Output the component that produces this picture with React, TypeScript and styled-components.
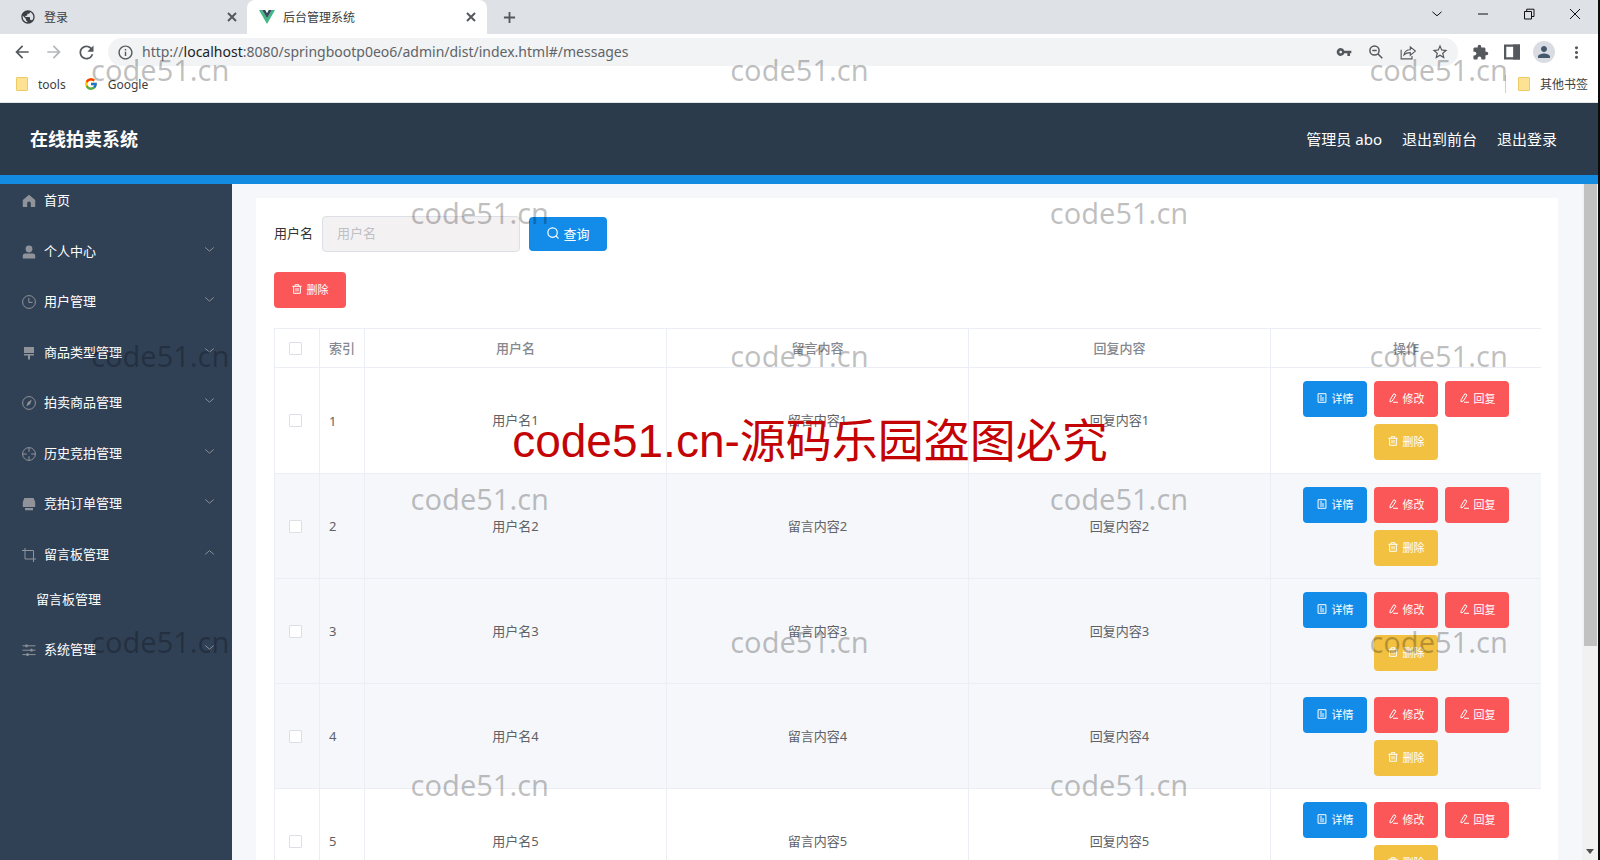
import React from "react";
import styled, { createGlobalStyle, css } from "styled-components";
import {
  MdArrowBack,
  MdArrowForward,
  MdExtension,
  MdInfoOutline,
  MdMoreVert,
  MdPerson,
  MdPublic,
  MdRefresh,
  MdStarOutline,
  MdVpnKey,
} from "react-icons/md";
import { FcGoogle } from "react-icons/fc";

const Global = createGlobalStyle`
  *, *::before, *::after { box-sizing: border-box; }
  body {
    margin: 0;
    font-family: "Noto Sans", "Noto Sans CJK SC", sans-serif;
    font-size: 13px;
    color: #333;
  }
  button, input { font: inherit; color: inherit; }
  button { border: 0; background: none; padding: 0; cursor: pointer; }
  ul { list-style: none; margin: 0; padding: 0; }
  a { color: inherit; text-decoration: none; }
  svg { display: block; flex: none; }
`;

/* ---------- browser frame ---------- */

const Window = styled.div`
  position: relative;
  display: flex;
  flex-direction: column;
  height: 100vh;
  overflow: hidden;
  border-right: 2px solid #0b0b0b;
  background: #fff;
`;

const TabStrip = styled.div`
  display: flex;
  flex: none;
  height: 34px;
  background: #dee1e6;
  font-size: 12px;
`;

const Tab = styled.div<{ $active?: boolean }>`
  display: flex;
  align-items: center;
  gap: 8px;
  width: ${(p) => (p.$active ? 240 : 247)}px;
  padding: 0 ${(p) => (p.$active ? "9px 0 12px" : "8px 0 20px")};
  border-radius: 8px 8px 0 0;
  background: ${(p) => (p.$active ? "#fff" : "transparent")};
  color: #3c4043;
`;

const TabTitle = styled.button`
  flex: 1;
  text-align: left;
`;

const IconButton = styled.button<{ $size?: number; $dim?: boolean }>`
  display: flex;
  align-items: center;
  justify-content: center;
  width: ${(p) => p.$size ?? 32}px;
  height: ${(p) => p.$size ?? 32}px;
  color: ${(p) => (p.$dim ? "#b4b6b9" : "#55595d")};
`;

const NewTab = styled(IconButton)`
  margin-left: 6px;
  height: 34px;
`;

const WindowControls = styled.div`
  display: flex;
  margin-left: auto;
`;

const ControlButton = styled.button`
  display: flex;
  align-items: center;
  justify-content: center;
  width: 46px;
  height: 28px;
  color: #111;
`;

const Toolbar = styled.div`
  display: flex;
  align-items: center;
  flex: none;
  height: 36px;
  padding: 0 6px;
`;

const Address = styled.div`
  display: flex;
  align-items: center;
  flex: 1;
  height: 28px;
  margin: 0 6px;
  padding: 0 2px 0 9px;
  border-radius: 14px;
  background: #f1f3f4;
  color: #55595d;
`;

const Url = styled.a`
  flex: 1;
  padding: 0 0 2px 8px;
  font-size: 14px;
  color: #5f6368;

  b { font-weight: 400; color: #202124; }
`;

const Avatar = styled.span`
  display: flex;
  align-items: center;
  justify-content: center;
  width: 22px;
  height: 22px;
  border-radius: 50%;
  background: #d9dde3;
  color: #44586c;
`;

const Bookmarks = styled.div`
  display: flex;
  align-items: center;
  flex: none;
  gap: 18px;
  height: 33px;
  padding: 0 10px 4px 16px;
  border-bottom: 1px solid #e3e4e6;
  font-size: 12px;
  color: #3c4043;
`;

const Bookmark = styled.a<{ $last?: boolean }>`
  display: flex;
  align-items: center;
  gap: 10px;
  ${(p) =>
    p.$last &&
    css`
      margin-left: auto;
      padding-left: 12px;
      border-left: 1px solid #c3d3e3;
    `}
`;

const Folder = styled.span`
  width: 12px;
  height: 14px;
  border: 1px solid #eccb66;
  border-radius: 1px;
  background: #fde293;
`;

/* ---------- application ---------- */

const AppHeader = styled.header`
  display: flex;
  align-items: center;
  justify-content: space-between;
  flex: none;
  height: 81px;
  padding: 0 41px 2px 30px;
  border-bottom: 9px solid #138be0;
  background: #2b3b4c;
  color: #fff;
`;

const SiteTitle = styled.h1`
  margin: 0;
  font-size: 18px;
  font-weight: 700;
`;

const HeaderLinks = styled.nav`
  display: flex;
  gap: 20px;
  font-size: 15px;
`;

const Body = styled.div`
  display: flex;
  flex: 1;
  min-height: 0;
`;

const Sidebar = styled.nav`
  flex: none;
  width: 232px;
  background: #304156;
  color: #fff;
`;

const MenuEntry = styled.li`
  &:nth-child(odd) { margin-bottom: 1px; }
  &:first-child { margin-bottom: 10px; }
`;

const MenuButton = styled.button<{ $short?: boolean }>`
  display: flex;
  align-items: center;
  gap: 8px;
  width: 100%;
  height: ${(p) => (p.$short ? 32 : 50)}px;
  padding: 2px 16px 0 22px;
  color: #909399;
`;

const MenuLabel = styled.span`
  flex: 1;
  padding-bottom: 4px;
  text-align: left;
  color: #fff;
`;

const MenuArrow = styled.span`
  padding-bottom: 6px;
`;

const SubLink = styled.a`
  display: block;
  height: 45px;
  padding-left: 36px;
  line-height: 40px;
`;

const Content = styled.main`
  flex: 1;
  min-width: 0;
  overflow: hidden;
  padding: 14px 24px 0;
  background: #f5f7fa;
`;

const Card = styled.section`
  min-height: 100%;
  padding: 18px 17px 18px 18px;
  background: #fff;
`;

const SearchForm = styled.form`
  display: flex;
  align-items: center;
  gap: 9px;
  height: 36px;
`;

const FieldLabel = styled.label`
  padding-bottom: 3px;
`;

const TextInput = styled.input`
  width: 198px;
  height: 36px;
  padding: 0 14px 2px;
  border: 1px solid #dcdfe6;
  border-radius: 4px;
  background: #f4f1f2;

  &::placeholder { color: #bcbfc5; }
`;

const tones = { blue: "#128ce8", red: "#fb5758", yellow: "#f2c142" };

const ActionButton = styled.button<{ $tone: keyof typeof tones; $wide?: boolean }>`
  display: flex;
  align-items: center;
  justify-content: center;
  gap: 5px;
  width: ${(p) => (p.$wide ? 72 : 64)}px;
  height: 36px;
  padding-bottom: 2px;
  border-radius: 4px;
  background: ${(p) => tones[p.$tone]};
  color: #fff;
  font-size: 11px;
`;

const SearchButton = styled(ActionButton)`
  width: 78px;
  height: 34px;
  font-size: 13px;
`;

const BulkActions = styled.div`
  display: flex;
  margin: 20px 0;
`;

const Table = styled.table`
  width: 100%;
  table-layout: fixed;
  border-collapse: separate;
  border-spacing: 0;
  border-top: 1px solid #ebeef5;
  border-left: 1px solid #ebeef5;
  color: #606266;
`;

const cell = css`
  padding: 0 8px 2px;
  border-bottom: 1px solid #ebeef5;
  border-right: 1px solid #ebeef5;
  text-align: center;

  &:first-child { padding: 0 12px 0 8px; }
  &:last-child { border-right: 0; }
`;

const HeadCell = styled.th`
  ${cell}
  height: 39px;
  color: #85888e;
  font-weight: 500;
`;

const Cell = styled.td<{ $left?: boolean }>`
  ${cell}
  height: 105px;
  ${(p) => p.$left && "padding: 0 8px 0 9px; text-align: left;"}
  &:last-child { padding-bottom: 0; }
  tr:first-child > & { height: 106px; }
`;

const Row = styled.tr<{ $shaded: boolean }>`
  background: ${(p) => (p.$shaded ? "#f5f7fa" : "#fff")};
`;

const Check = styled.input.attrs({ type: "checkbox" })`
  appearance: none;
  display: block;
  width: 13px;
  height: 13px;
  margin: 0 auto;
  border: 1px solid #dcdfe6;
  border-radius: 1px;
  background: #fff;
`;

const RowActions = styled.div`
  display: flex;
  flex-wrap: wrap;
  justify-content: center;
  gap: 7px;
  width: 206px;
  margin: 0 auto;
`;

const ScrollTrack = styled.div`
  display: flex;
  flex-direction: column;
  justify-content: space-between;
  align-items: center;
  flex: none;
  width: 16px;
  padding-bottom: 6px;
  background: #f1f1f1;
  color: #505050;
`;

const ScrollThumb = styled.div`
  width: 13px;
  height: 69%;
  background: #c1c1c1;
`;

/* ---------- watermark layer ---------- */

const MarkLayer = styled.div`
  position: absolute;
  inset: 50px -91px 0 91px;
  display: grid;
  grid-template-columns: repeat(5, 20%);
  grid-auto-rows: 143px;
  overflow: hidden;
  pointer-events: none;
`;

const Mark = styled.span<{ $col: number; $row: number }>`
  grid-column: ${(p) => p.$col};
  grid-row: ${(p) => p.$row};
  font-size: 29px;
  line-height: 40px;
  color: rgba(0, 0, 0, 0.25);
`;

const Notice = styled.strong`
  position: absolute;
  top: 411px;
  left: 0;
  right: 0;
  padding-left: 22px;
  text-align: center;
  font-family: "Liberation Sans", "Noto Sans CJK SC", sans-serif;
  font-size: 46px;
  font-weight: 400;
  line-height: 60px;
  color: #c40404;
  pointer-events: none;
`;

/* ---------- icons ---------- */

type IconProps = { size?: number; w?: number; children: React.ReactNode };

const Line = ({ size = 14, w = 1, children }: IconProps) => (
  <svg width={size} height={size} viewBox="0 0 14 14" fill="none" stroke="currentColor" strokeWidth={w} aria-hidden="true">
    {children}
  </svg>
);

const icons = {
  home: <path d="M7 .8 13.2 6v7H8.8V9.2a1.8 1.8 0 0 0-3.6 0V13H.8V6z" fill="currentColor" stroke="none" />,
  user: (
    <g fill="currentColor" stroke="none">
      <circle cx="7" cy="4" r="3.4" />
      <path d="M.8 13.4V11a2.4 2.4 0 0 1 2.4-2.4h7.6a2.4 2.4 0 0 1 2.4 2.4v2.4z" />
    </g>
  ),
  clock: <><circle cx="7" cy="7" r="6.4" /><path d="M6.8 3v4.4h3.8" /></>,
  sign: (
    <g fill="currentColor" stroke="none">
      <path d="M2 1h10v6H2zM2 8h10v1.6H8V13.4H6V9.6H2z" />
    </g>
  ),
  compass: <><circle cx="7" cy="7" r="6.4" /><path d="M9.8 3.4 8.2 8 4.4 10.6 5.8 6.200z" fill="currentColor" stroke="none" /></>,
  aim: <><circle cx="7" cy="7" r="6.4" /><path d="M7 .6v4.2M7 9.2v4.2M.6 7h4.2M9.2 7h4.2" /></>,
  printer: (
    <g fill="currentColor" stroke="none">
      <path d="M2.4 1h9.2l1.6 4v5H.8V5zM3 11h8v2.2H3z" />
    </g>
  ),
  crop: <path d="M3 0v11h11M0 2.5h11.5V14" />,
  sliders: <><path d="M.5 2.8h13M.5 7.2h13M.5 11.6h13" /><path d="M4.5 1.4v2.8M9.5 5.8v2.8M5.5 10.2V13" strokeWidth="2" /></>,
  down: <path d="m2.4 4.8 4.6 4 4.6-4" />,
  up: <path d="m2.4 9 4.6-4 4.6 4" />,
  search: <><circle cx="6.5" cy="6.5" r="5.5" /><path d="m10.4 10.4 3 3" /></>,
  zoomOut: <><circle cx="5.500" cy="5.500" r="4.600" /><path d="m9 9 4.300 4.300M3.300 5.500h4.400" /></>,
  trash: <path d="M.5 3.2h13M4.5 3V1h5v2M2.3 3.2V13h9.4V3.2M5.6 5.6v4.8M8.4 5.6v4.8" />,
  doc: <path d="M1.5 1h11v12h-11zM4 4.2h3M4 7h6M4 9.8h6" />,
  edit: <path d="M3 9.4 8.2 1l3 1.9L6 11.2 2.8 12.6zM7 13h7" />,
  close: <path d="m3 3 8 8M11 3l-8 8" />,
  plus: <path d="M7 1v12M1 7h12" />,
  min: <path d="M2 7h10" />,
  restore: <path d="M2.5 4.5h7v7.500h-7zM4.700 4.500V2.200H12v7.300H9.500" />,
  cross: <path d="m2 2 10 10M12 2 2 12" />,
  panel: <><path d="M1 1.500h12v11H1z" /><path d="M9 1.500h4v11H9z" fill="currentColor" /></>,
  share: <path d="M1 5v8h9.500v-2.500M3.500 9.500C4 6.500 6 5 9 5V2.500L13.500 6.200 9 9.800V7.500c-2.500 0-4 .5-5.500 2z" />,
};

type IconName = keyof typeof icons;

const Icon = ({ name, size, w }: { name: IconName; size?: number; w?: number }) => (
  <Line size={size} w={w}>{icons[name]}</Line>
);

const VueLogo = () => (
  <svg width="16" height="14" viewBox="0 0 16 14" aria-hidden="true">
    <path d="M0 0h3.200L8 8.300 12.800 0H16L8 14z" fill="#41b883" />
    <path d="M3.200 0h3L8 3.200 9.800 0h3L8 8.300z" fill="#35495e" />
  </svg>
);

/* ---------- data ---------- */

const menu: { icon: IconName; label: string; children?: string[]; plain?: boolean }[] = [
  { icon: "home", label: "首页", plain: true },
  { icon: "user", label: "个人中心" },
  { icon: "clock", label: "用户管理" },
  { icon: "sign", label: "商品类型管理" },
  { icon: "compass", label: "拍卖商品管理" },
  { icon: "aim", label: "历史竞拍管理" },
  { icon: "printer", label: "竞拍订单管理" },
  { icon: "crop", label: "留言板管理", children: ["留言板管理"] },
  { icon: "sliders", label: "系统管理" },
];

const rows = [1, 2, 3, 4, 5];

const marks = [1, 2, 3, 4, 5, 6].flatMap((row) =>
  (row % 2 ? [1, 3, 5] : [2, 4]).map((col) => ({ row, col }))
);

export default function App() {
  return (
    <Window>
      <Global />
      <TabStrip>
        <Tab>
          <MdPublic size={16} />
          <TabTitle>登录</TabTitle>
          <IconButton $size={14} aria-label="关闭标签页"><Icon name="close" w={2} /></IconButton>
        </Tab>
        <Tab $active>
          <VueLogo />
          <TabTitle>后台管理系统</TabTitle>
          <IconButton $size={14} aria-label="关闭标签页"><Icon name="close" w={2} /></IconButton>
        </Tab>
        <NewTab aria-label="新标签页"><Icon name="plus" size={13} w={2} /></NewTab>
        <WindowControls>
          <ControlButton aria-label="搜索标签页"><Icon name="down" /></ControlButton>
          <ControlButton aria-label="最小化"><Icon name="min" /></ControlButton>
          <ControlButton aria-label="还原"><Icon name="restore" /></ControlButton>
          <ControlButton aria-label="关闭"><Icon name="cross" /></ControlButton>
        </WindowControls>
      </TabStrip>
      <Toolbar>
        <IconButton aria-label="后退"><MdArrowBack size={20} /></IconButton>
        <IconButton $dim aria-label="前进"><MdArrowForward size={20} /></IconButton>
        <IconButton aria-label="刷新"><MdRefresh size={21} /></IconButton>
        <Address>
          <MdInfoOutline size={17} />
          <Url href="#/messages">
            http://<b>localhost</b>:8080/springbootp0eo6/admin/dist/index.html#/messages
          </Url>
          <IconButton aria-label="密码"><MdVpnKey size={16} /></IconButton>
          <IconButton aria-label="缩放"><Icon name="zoomOut" w={1.5} /></IconButton>
          <IconButton aria-label="分享"><Icon name="share" size={16} /></IconButton>
          <IconButton aria-label="收藏"><MdStarOutline size={18} /></IconButton>
        </Address>
        <IconButton aria-label="扩展程序"><MdExtension size={17} /></IconButton>
        <IconButton aria-label="侧边栏"><Icon name="panel" size={16} w={2} /></IconButton>
        <IconButton aria-label="个人资料"><Avatar><MdPerson size={18} /></Avatar></IconButton>
        <IconButton aria-label="菜单"><MdMoreVert size={19} /></IconButton>
      </Toolbar>
      <Bookmarks>
        <Bookmark href="#tools"><Folder />tools</Bookmark>
        <Bookmark href="#google"><FcGoogle size={14} />Google</Bookmark>
        <Bookmark href="#other" $last><Folder />其他书签</Bookmark>
      </Bookmarks>

      <AppHeader>
        <SiteTitle>在线拍卖系统</SiteTitle>
        <HeaderLinks>
          <span>管理员 abo</span>
          <a href="#front">退出到前台</a>
          <a href="#logout">退出登录</a>
        </HeaderLinks>
      </AppHeader>

      <Body>
        <Sidebar>
          <ul>
            {menu.map((m) => (
              <MenuEntry key={m.label}>
                <MenuButton $short={m.plain}>
                  <Icon name={m.icon} />
                  <MenuLabel>{m.label}</MenuLabel>
                  {!m.plain && (
                    <MenuArrow><Icon name={m.children ? "up" : "down"} size={13} /></MenuArrow>
                  )}
                </MenuButton>
                {m.children?.map((c) => (
                  <SubLink key={c} href="#/messages">{c}</SubLink>
                ))}
              </MenuEntry>
            ))}
          </ul>
        </Sidebar>

        <Content>
          <Card>
            <SearchForm onSubmit={(e) => e.preventDefault()}>
              <FieldLabel htmlFor="username">用户名</FieldLabel>
              <TextInput id="username" placeholder="用户名" />
              <SearchButton $tone="blue"><Icon name="search" size={12} w={1.4} />查询</SearchButton>
            </SearchForm>
            <BulkActions>
              <ActionButton $tone="red" $wide><Icon name="trash" size={10} w={1.4} />删除</ActionButton>
            </BulkActions>
            <Table>
              <colgroup>
                <col width="45" />
                <col width="45" />
                <col />
                <col />
                <col />
                <col width="270" />
              </colgroup>
              <thead>
                <tr>
                  <HeadCell><Check aria-label="全选" /></HeadCell>
                  <HeadCell>索引</HeadCell>
                  <HeadCell>用户名</HeadCell>
                  <HeadCell>留言内容</HeadCell>
                  <HeadCell>回复内容</HeadCell>
                  <HeadCell>操作</HeadCell>
                </tr>
              </thead>
              <tbody>
                {rows.map((n) => (
                  <Row key={n} $shaded={n > 1 && n < 5}>
                    <Cell><Check aria-label={`选择 ${n}`} /></Cell>
                    <Cell $left>{n}</Cell>
                    <Cell>用户名{n}</Cell>
                    <Cell>留言内容{n}</Cell>
                    <Cell>回复内容{n}</Cell>
                    <Cell>
                      <RowActions>
                        <ActionButton $tone="blue"><Icon name="doc" size={10} w={1.4} />详情</ActionButton>
                        <ActionButton $tone="red"><Icon name="edit" size={10} w={1.4} />修改</ActionButton>
                        <ActionButton $tone="red"><Icon name="edit" size={10} w={1.4} />回复</ActionButton>
                        <ActionButton $tone="yellow"><Icon name="trash" size={10} w={1.4} />删除</ActionButton>
                      </RowActions>
                    </Cell>
                  </Row>
                ))}
              </tbody>
            </Table>
          </Card>
        </Content>

        <ScrollTrack>
          <ScrollThumb />
          <svg width="8" height="5" viewBox="0 0 8 5" aria-hidden="true"><path d="M0 0h8L4 5z" fill="currentColor" /></svg>
        </ScrollTrack>
      </Body>

      <MarkLayer aria-hidden="true">
        {marks.map((m) => (
          <Mark key={`${m.row}-${m.col}`} $row={m.row} $col={m.col}>code51.cn</Mark>
        ))}
      </MarkLayer>
      <Notice>code51.cn-源码乐园盗图必究</Notice>
    </Window>
  );
}
